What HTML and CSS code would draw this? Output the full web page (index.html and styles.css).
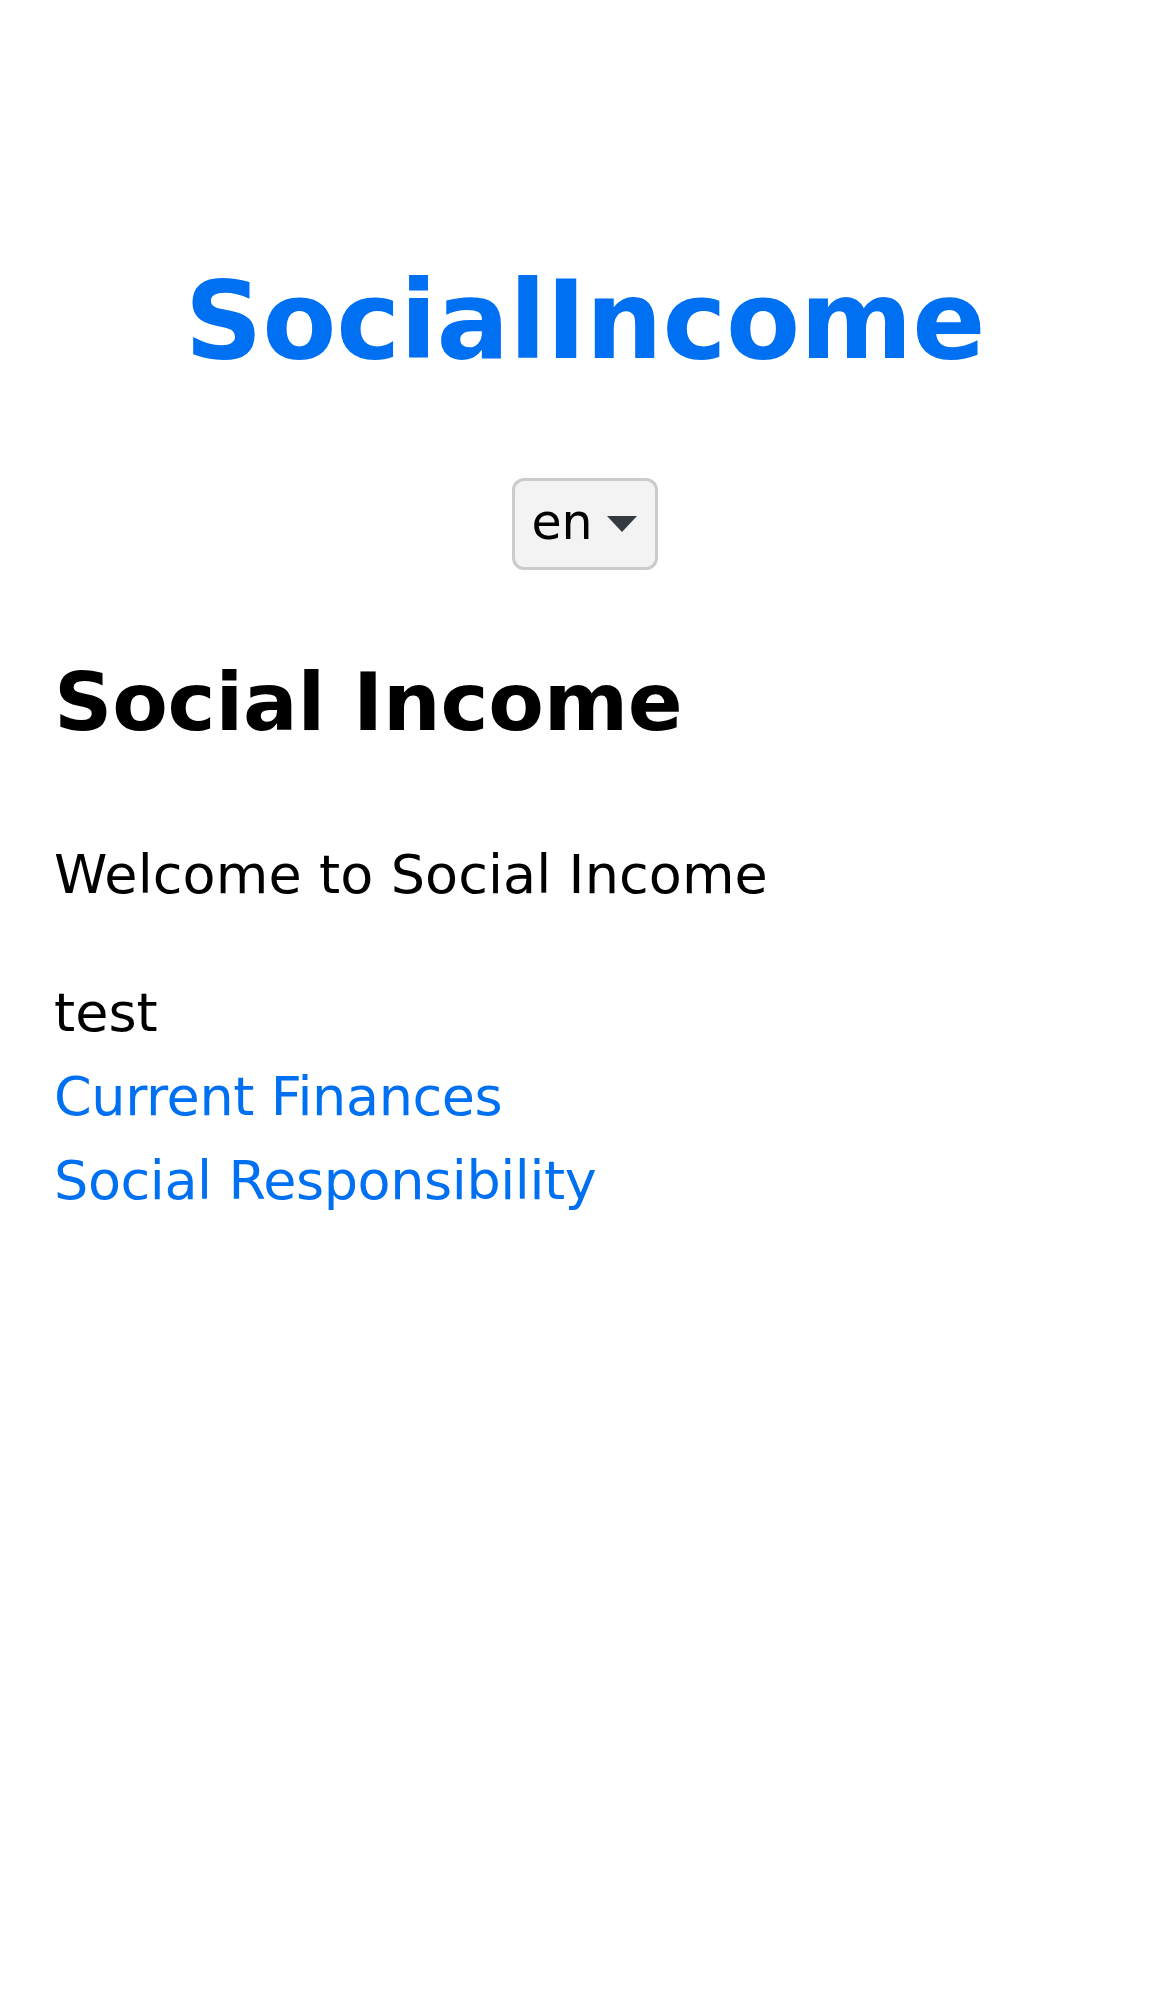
FILE: index.html
```html
<!DOCTYPE html>
<html lang="en">
<head>
<meta charset="utf-8">
<title>SocialIncome</title>
<link rel="stylesheet" href="styles.css">
</head>
<body>
<header class="top">
  <h1 class="brand">SocialIncome</h1>
  <div class="lang">
    <span class="lang-code">en</span>
    <svg class="lang-caret" width="30" height="16" viewBox="0 0 30 16"><path d="M0 0 H30 L15 16 Z" fill="#343a40"/></svg>
  </div>
</header>
<main class="content">
  <h2 class="title">Social Income</h2>
  <p class="lead">Welcome to Social Income</p>
  <div class="lines">
    <div class="line">test</div>
    <a class="line link" href="#">Current Finances</a>
    <a class="line link" href="#">Social Responsibility</a>
  </div>
</main>
</body>
</html>
```

FILE: styles.css
```css
html, body {
  margin: 0;
  padding: 0;
  background: #ffffff;
}
body {
  font-family: "DejaVu Sans", sans-serif;
  color: #000000;
}
.top {
  display: flex;
  flex-direction: column;
  align-items: center;
  padding-top: 256px;
}
.brand {
  margin: 0;
  font-size: 108px;
  line-height: 130px;
  font-weight: 700;
  letter-spacing: -0.3px;
  color: #0070f3;
}
.lang {
  margin-top: 92px;
  height: 86px;
  display: inline-flex;
  align-items: center;
  gap: 14px;
  padding: 0 18px 0 16px;
  border: 3px solid #cbcbcb;
  border-radius: 12px;
  background: #f3f3f3;
}
.lang-code {
  font-size: 49px;
  line-height: 1;
  padding-bottom: 4px;
}
.lang-caret {
  display: block;
}
.content {
  padding: 0 54px;
}
.title {
  margin: 84px 0 0;
  font-size: 81px;
  line-height: 97px;
  font-weight: 700;
  letter-spacing: -0.2px;
}
.lead {
  margin: 82px 0 0;
  font-size: 54px;
  line-height: 84px;
  letter-spacing: 0.1px;
}
.lines {
  margin-top: 54px;
  font-size: 54px;
  line-height: 84px;
}
.line {
  display: block;
}
.link {
  color: #0070f3;
  text-decoration: none;
  letter-spacing: -0.4px;
}
```
